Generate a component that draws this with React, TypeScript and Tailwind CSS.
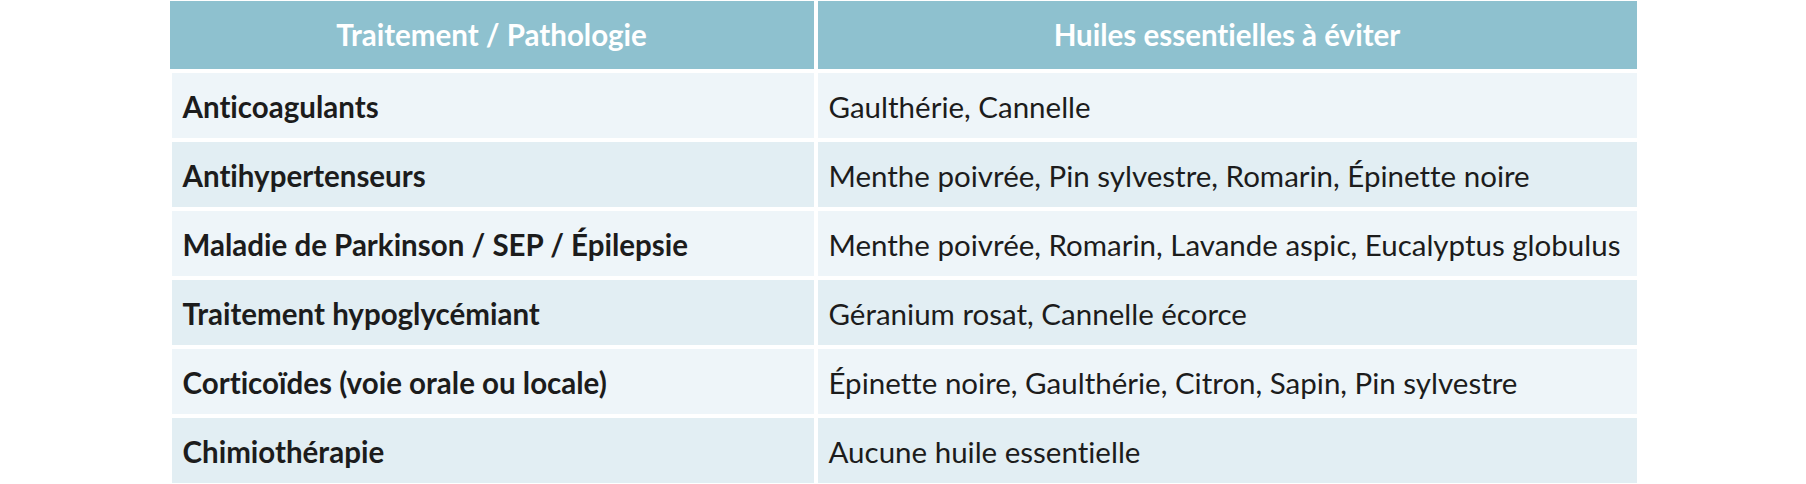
import React from 'react';

const rows: [string, string][] = [
  ['Anticoagulants', 'Gaulthérie, Cannelle'],
  ['Antihypertenseurs', 'Menthe poivrée, Pin sylvestre, Romarin, Épinette noire'],
  ['Maladie de Parkinson / SEP / Épilepsie', 'Menthe poivrée, Romarin, Lavande aspic, Eucalyptus globulus'],
  ['Traitement hypoglycémiant', 'Géranium rosat, Cannelle écorce'],
  ['Corticoïdes (voie orale ou locale)', 'Épinette noire, Gaulthérie, Citron, Sapin, Pin sylvestre'],
  ['Chimiothérapie', 'Aucune huile essentielle'],
];

export default function App() {
  return (
    <div className="w-[1806px] h-[484px] bg-white overflow-hidden font-['Lato',sans-serif] [font-variant-ligatures:none]">
      <div className="w-[1467px] mx-auto pt-px grid grid-cols-[644px_819px] gap-x-[4px] gap-y-[4px]">
        <div className="h-[68px] bg-[#8ec1cf] flex items-center justify-center text-white font-bold text-[29.5px]">
          Traitement / Pathologie
        </div>
        <div className="h-[68px] bg-[#8ec1cf] flex items-center justify-center text-white font-bold text-[29.5px]">
          Huiles essentielles à éviter
        </div>
        {rows.map(([a, b], i) => {
          const bg = i % 2 === 0 ? 'bg-[#eef5f9]' : 'bg-[#e2eef3]';
          return (
            <React.Fragment key={a}>
              <div className={`h-[65px] ml-[2px] ${bg} flex items-center px-[11px] pt-[4px] text-[29.5px] font-bold text-[#1c1c1c]`}>
                {a}
              </div>
              <div className={`h-[65px] ${bg} flex items-center px-[11px] pt-[4px] text-[29.5px] text-[#1c1c1c]`}>
                {b}
              </div>
            </React.Fragment>
          );
        })}
      </div>
    </div>
  );
}
